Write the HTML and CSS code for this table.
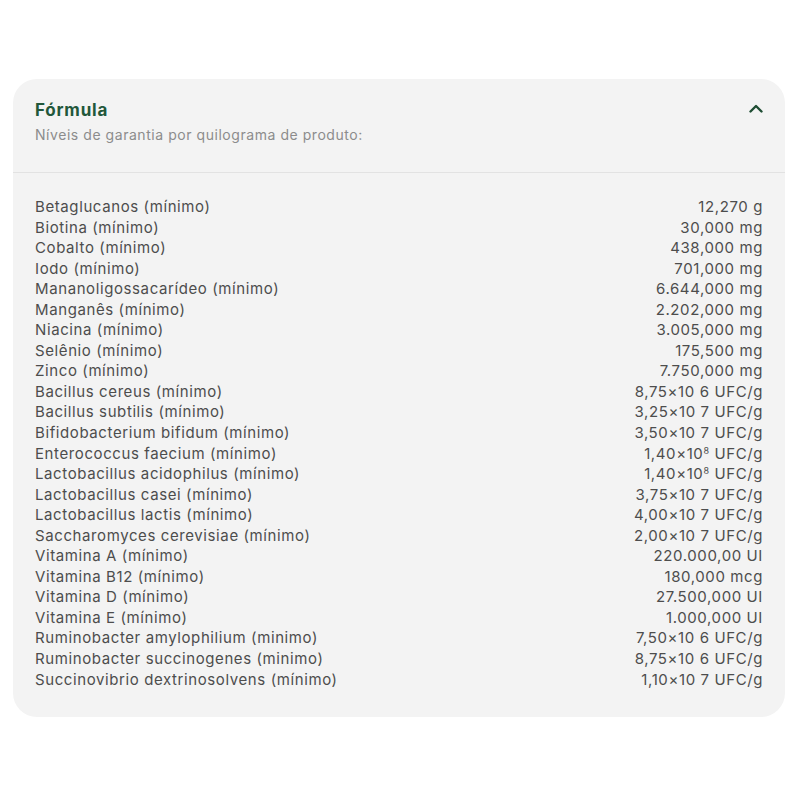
FILE: index.html
```html
<!DOCTYPE html>
<html lang="pt-BR">
<head>
  <meta charset="UTF-8">
  <meta name="viewport" content="width=device-width, initial-scale=1.0">
  <title>Fórmula</title>
  <link rel="stylesheet" href="styles.css">
</head>
<body>
  <div class="card">
    <div class="card-header">
      <div class="heading">
        <h2>Fórmula</h2>
        <p class="subtitle">Níveis de garantia por quilograma de produto:</p>
      </div>
      <button class="toggle" aria-label="Recolher">
        <svg width="14" height="9" viewBox="0 0 14 9"><path d="M1.5 7.5 L7 2 L12.5 7.5" fill="none" stroke="#1e4d33" stroke-width="2.4" stroke-linecap="round" stroke-linejoin="round"/></svg>
      </button>
    </div>

    <ul class="levels">
      <li><span>Betaglucanos (mínimo)</span><span>12,270 g</span></li>
      <li><span>Biotina (mínimo)</span><span>30,000 mg</span></li>
      <li><span>Cobalto (mínimo)</span><span>438,000 mg</span></li>
      <li><span>Iodo (mínimo)</span><span>701,000 mg</span></li>
      <li><span>Mananoligossacarídeo (mínimo)</span><span>6.644,000 mg</span></li>
      <li><span>Manganês (mínimo)</span><span>2.202,000 mg</span></li>
      <li><span>Niacina (mínimo)</span><span>3.005,000 mg</span></li>
      <li><span>Selênio (mínimo)</span><span>175,500 mg</span></li>
      <li><span>Zinco (mínimo)</span><span>7.750,000 mg</span></li>
      <li><span>Bacillus cereus (mínimo)</span><span>8,75×10 6 UFC/g</span></li>
      <li><span>Bacillus subtilis (mínimo)</span><span>3,25×10 7 UFC/g</span></li>
      <li><span>Bifidobacterium bifidum (mínimo)</span><span>3,50×10 7 UFC/g</span></li>
      <li><span>Enterococcus faecium (mínimo)</span><span>1,40×10<sup>8</sup> UFC/g</span></li>
      <li><span>Lactobacillus acidophilus (mínimo)</span><span>1,40×10<sup>8</sup> UFC/g</span></li>
      <li><span>Lactobacillus casei (mínimo)</span><span>3,75×10 7 UFC/g</span></li>
      <li><span>Lactobacillus lactis (mínimo)</span><span>4,00×10 7 UFC/g</span></li>
      <li><span>Saccharomyces cerevisiae (mínimo)</span><span>2,00×10 7 UFC/g</span></li>
      <li><span>Vitamina A (mínimo)</span><span>220.000,00 UI</span></li>
      <li><span>Vitamina B12 (mínimo)</span><span>180,000 mcg</span></li>
      <li><span>Vitamina D (mínimo)</span><span>27.500,000 UI</span></li>
      <li><span>Vitamina E (mínimo)</span><span>1.000,000 UI</span></li>
      <li><span>Ruminobacter amylophilium (minimo)</span><span>7,50×10 6 UFC/g</span></li>
      <li><span>Ruminobacter succinogenes (minimo)</span><span>8,75×10 6 UFC/g</span></li>
      <li><span>Succinovibrio dextrinosolvens (mínimo)</span><span>1,10×10 7 UFC/g</span></li>
    </ul>
  </div>
</body>
</html>
```

FILE: styles.css
```css
body {
  margin: 0;
  padding: 79px 15px 0 13px;
  background: #fff;
  font-family: Inter, 'Noto Sans', sans-serif;
  color: #4d4d4d;
}

.card {
  background: #f3f3f3;
  border-radius: 24px;
  padding-bottom: 27px;
}

.card-header {
  display: flex;
  justify-content: space-between;
  align-items: flex-start;
  padding: 20px 22px 28px 22px;
  border-bottom: 1px solid #e2e2e2;
}

.card-header h2 {
  margin: 0;
  font-size: 17px;
  font-weight: 700;
  letter-spacing: 0.8px;
  color: #22573a;
  line-height: 22px;
}

.subtitle {
  margin: 4px 0 0;
  font-size: 14px;
  letter-spacing: 0.55px;
  color: #8c8c8c;
  line-height: 19px;
}

.toggle {
  border: none;
  background: none;
  padding: 0;
  margin-top: 2px;
  cursor: pointer;
}

.levels {
  list-style: none;
  margin: 0;
  padding: 24px 22px 0 22px;
}

.levels li {
  display: flex;
  justify-content: space-between;
  font-size: 15px;
  letter-spacing: 0.6px;
  line-height: 20.55px;
}

.levels sup {
  font-size: 9px;
  line-height: 0;
  vertical-align: 5px;
}
```
